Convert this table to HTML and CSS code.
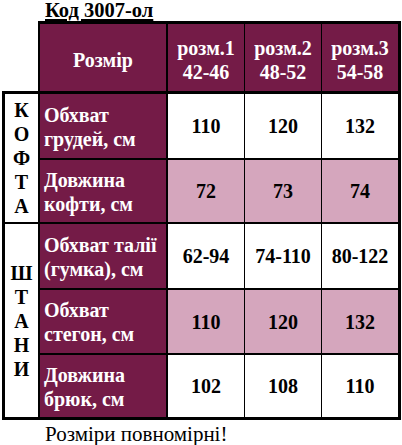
FILE: index.html
```html
<!DOCTYPE html>
<html lang="uk">
<head>
<meta charset="utf-8">
<title>Код 3007-ол</title>
<link rel="stylesheet" href="styles.css">
</head>
<body>
<div class="page">
  <div class="title">Код 3007-ол</div>
  <div class="grid">
    <div class="corner"></div>
    <div class="hd hd-label">Розмір</div>
    <div class="hd hd-size">розм.1<br>42-46</div>
    <div class="hd hd-size">розм.2<br>48-52</div>
    <div class="hd hd-size hd-last">розм.3<br>54-58</div>

    <div class="group group-top">К<br>О<br>Ф<br>Т<br>А</div>
    <div class="lbl">Обхват<br>грудей, см</div>
    <div class="val">110</div>
    <div class="val">120</div>
    <div class="val val-last">132</div>

    <div class="lbl">Довжина<br>кофти, см</div>
    <div class="val pink">72</div>
    <div class="val pink">73</div>
    <div class="val pink val-last">74</div>

    <div class="group group-bottom">Ш<br>Т<br>А<br>Н<br>И</div>
    <div class="lbl">Обхват талії<br>(гумка), см</div>
    <div class="val">62-94</div>
    <div class="val">74-110</div>
    <div class="val val-last">80-122</div>

    <div class="lbl">Обхват<br>стегон, см</div>
    <div class="val pink">110</div>
    <div class="val pink">120</div>
    <div class="val pink val-last">132</div>

    <div class="lbl lbl-end">Довжина<br>брюк, см</div>
    <div class="val val-end">102</div>
    <div class="val val-end">108</div>
    <div class="val val-end val-last">110</div>
  </div>
  <div class="note">Розміри повномірні!</div>
</div>
</body>
</html>
```

FILE: styles.css
```css
html, body {
  margin: 0;
  padding: 0;
  background: #ffffff;
}

.page {
  padding-left: 2px;
  font-family: "Liberation Serif", "Times New Roman", serif;
  color: #000000;
}

.title {
  padding-left: 43px;
  height: 21px;
  font-size: 20.5px;
  line-height: 21px;
  font-weight: bold;
  text-decoration: underline;
  text-underline-offset: 2px;
}

.grid {
  display: grid;
  grid-template-columns: 38px 128px 77px 77px 79px;
  grid-template-rows: 73px 66px 64px 66px 65px 65px;
  font-size: 20px;
  line-height: 24px;
  font-weight: bold;
}

.grid > div {
  box-sizing: border-box;
  border: 0 solid #000000;
}

.corner {
  border-right-width: 2px !important;
  border-bottom-width: 3px !important;
}

.hd {
  background: #741b47;
  color: #ffffff;
  border-top-width: 3px !important;
  border-bottom-width: 3px !important;
  border-right-width: 1px !important;
  display: flex;
  align-items: center;
  justify-content: center;
  text-align: center;
  padding-top: 4px;
}

.hd-label {
  border-right-width: 2px !important;
}

.hd-last {
  border-right-width: 3px !important;
}

.group {
  border-left-width: 3px !important;
  border-right-width: 2px !important;
  border-bottom-width: 2px !important;
  display: flex;
  align-items: center;
  justify-content: center;
  text-align: center;
}

.group-top {
  grid-row: span 2;
}

.group-bottom {
  grid-row: span 3;
  border-bottom-width: 3px !important;
}

.lbl {
  background: #741b47;
  color: #ffffff;
  border-right-width: 2px !important;
  border-bottom-width: 2px !important;
  display: flex;
  align-items: center;
  padding-left: 4px;
  padding-top: 1px;
}

.val {
  border-right-width: 1px !important;
  border-bottom-width: 2px !important;
  display: flex;
  align-items: center;
  justify-content: center;
}

.pink {
  background: #d5a6bd;
}

.val-last {
  border-right-width: 3px !important;
}

.lbl-end,
.val-end {
  border-bottom-width: 3px !important;
}

.note {
  padding-left: 43px;
  margin-top: 3px;
  font-size: 21px;
  line-height: 23px;
}
```
